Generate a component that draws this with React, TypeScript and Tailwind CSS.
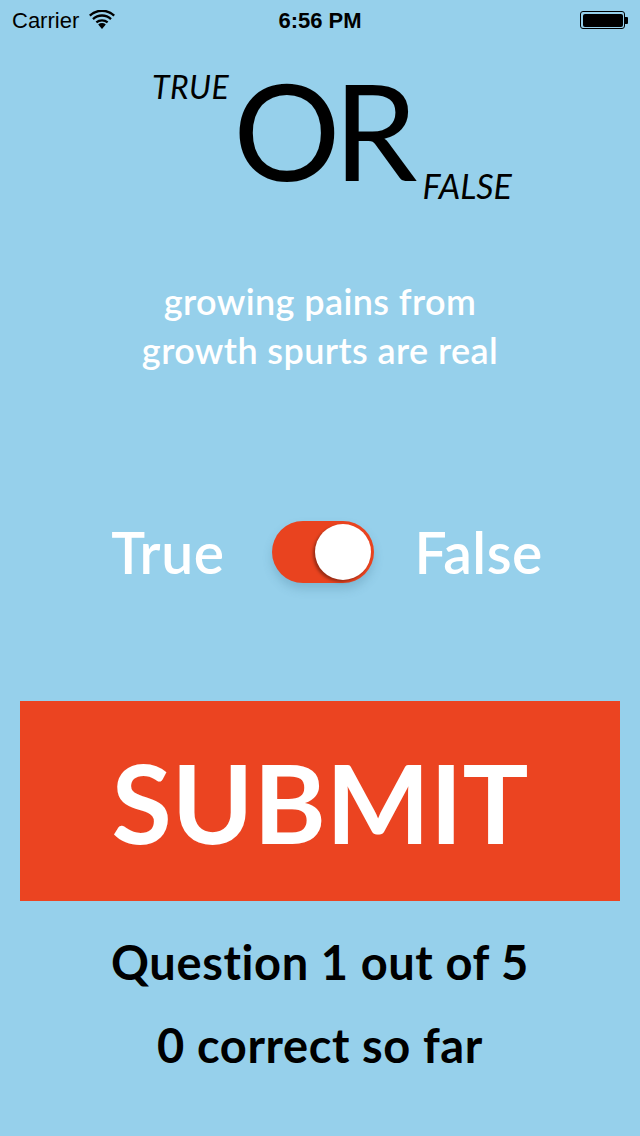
import { useState } from 'react';

function Wifi() {
  return (
    <svg width="26" height="20" viewBox="0 0 26 20" fill="black">
      <path d="M13 19 L9.2 14.6 A5.6 5.6 0 0 1 16.8 14.6 Z" />
      <path d="M6.6 11.6 A9.6 9.6 0 0 1 19.4 11.6 L17.9 13.3 A7.4 7.4 0 0 0 8.1 13.3 Z" />
      <path d="M3.2 8.2 A14.4 14.4 0 0 1 22.8 8.2 L21.2 10 A12 12 0 0 0 4.8 10 Z" />
      <path d="M0 4.7 A19 19 0 0 1 26 4.7 L24.4 6.5 A16.6 16.6 0 0 0 1.6 6.5 Z" />
    </svg>
  );
}

function Battery() {
  return (
    <div className="flex items-center">
      <div className="w-[45px] h-[18px] rounded-[3px] border border-black p-[1.5px]">
        <div className="w-full h-full rounded-[2px] bg-black" />
      </div>
      <div className="w-[3px] h-[7px] bg-black rounded-r-[1px]" />
    </div>
  );
}

export default function App() {
  const [isFalse, setIsFalse] = useState(true);

  return (
    <div
      className="w-[640px] h-[1136px] bg-[#96d0eb] flex flex-col overflow-hidden [font-variant-ligatures:none]"
      style={{ fontFamily: 'Lato, "Open Sans", sans-serif' }}
    >
      {/* status bar */}
      <div className="h-[40px] flex items-center justify-between px-[12px] text-black" style={{ fontFamily: '"Liberation Sans", Arial, sans-serif' }}>
        <div className="flex items-center gap-[10px] w-[140px]">
          <span className="text-[22px]">Carrier</span>
          <Wifi />
        </div>
        <span className="text-[22px] font-bold">6:56 PM</span>
        <div className="w-[140px] flex justify-end">
          <Battery />
        </div>
      </div>

      {/* title */}
      <div className="flex justify-center items-start pl-[24px] text-black">
        <span className="italic text-[32px] tracking-[0.5px] leading-none mt-[31px]">TRUE</span>
        <span className="text-[134px] tracking-[-7px] leading-none mt-[23px] ml-[4px]">OR</span>
        <span className="italic text-[34px] leading-none mt-[129px] ml-[12px]">FALSE</span>
      </div>

      {/* question */}
      <div className="mt-[74px] text-center text-white text-[36px] tracking-[0.4px] leading-[49px] font-semibold">
        growing pains from
        <br />
        growth spurts are real
      </div>

      {/* toggle */}
      <div className="mt-[146px] pl-[14px] flex items-center justify-center text-white text-[57px] tracking-[0.5px] font-semibold">
        <span className="leading-none mr-[48px]">True</span>
        <button
          onClick={() => setIsFalse(!isFalse)}
          className={`w-[102px] h-[62px] rounded-full flex items-center px-[3px] shadow-[0_6px_10px_rgba(60,110,140,0.25)] ${isFalse ? 'bg-[#e9431f] justify-end' : 'bg-[#d8d8d8] justify-start'}`}
        >
          <span className="w-[56px] h-[56px] rounded-full bg-white shadow-[-2px_2px_3px_rgba(0,0,0,0.35)]" />
        </button>
        <span className="leading-none ml-[40px]">False</span>
      </div>

      {/* submit */}
      <button className="mt-[118px] mx-[20px] h-[200px] shrink-0 bg-[#eb4421] text-white text-[110px] font-bold leading-none flex items-center justify-center">
        SUBMIT
      </button>

      {/* progress */}
      <div className="mt-[38px] text-center text-black text-[47px] tracking-[0.6px] font-bold leading-none">
        Question 1 out of 5
      </div>
      <div className="mt-[36px] text-center text-black text-[47px] tracking-[0.6px] font-bold leading-none">
        0 correct so far
      </div>
    </div>
  );
}
